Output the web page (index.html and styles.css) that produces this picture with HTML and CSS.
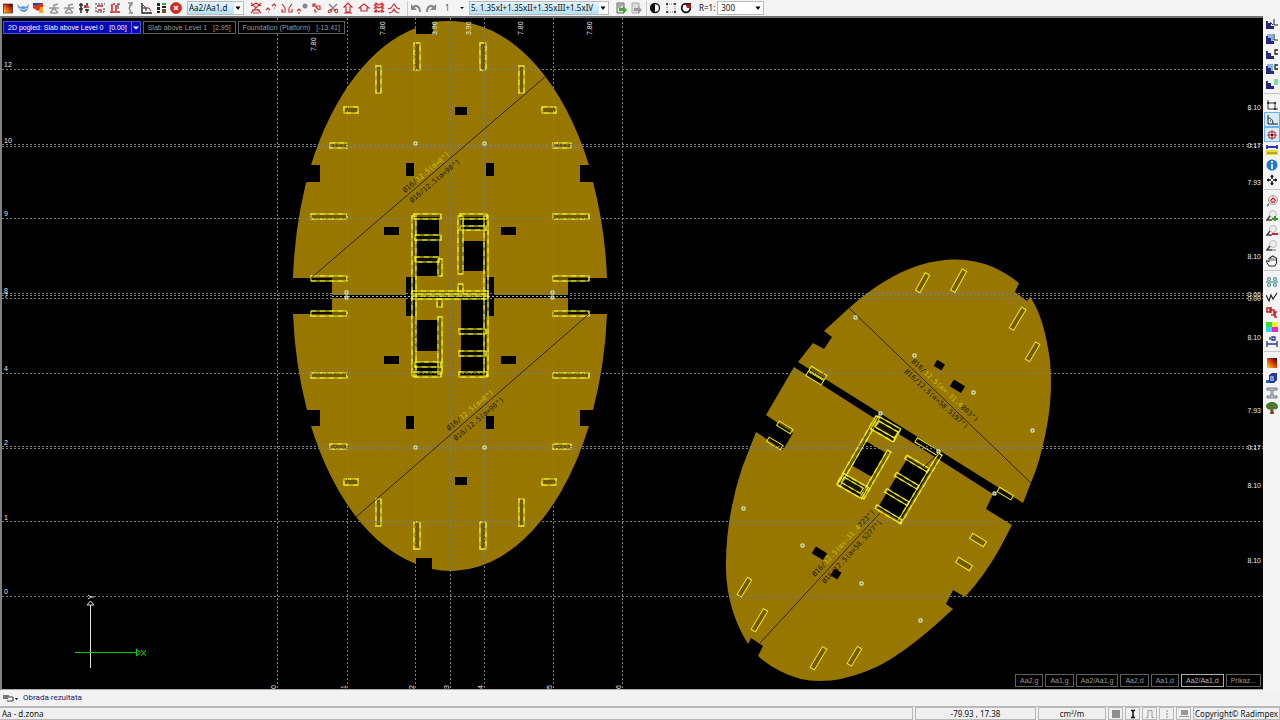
FILE: index.html
```html
<!DOCTYPE html>
<html lang="en">
<head>
<meta charset="utf-8">
<title>Aa - d.zona</title>
<link rel="stylesheet" href="styles.css">
</head>
<body>
<header class="toolbar">
  <div class="group group-results">
    <button class="tool" aria-label="Colour map"><svg viewBox="0 0 12 12"><defs><linearGradient id="heat" x1="0" y1="1" x2="1" y2="0"><stop offset="0" stop-color="#f0e020"/><stop offset=".45" stop-color="#e85010"/><stop offset=".7" stop-color="#a02010"/><stop offset="1" stop-color="#101010"/></linearGradient></defs><rect x="1.500" y="2" width="9" height="9" fill="url(#heat)" stroke="#301008" stroke-width=".6"/></svg></button>
    <button class="tool" aria-label="Surface"><svg viewBox="0 0 12 12"><path d="M0 2l3 3 3-1 3 1 3-3c-1 5-2 8-5 8S1 7 0 2z" fill="#5a96dc"/><path d="M2 6c3 2 6 2 8 0" fill="none" stroke="#e4f0ff"/></svg></button>
    <button class="tool" aria-label="Section map"><svg viewBox="0 0 12 12"><rect x="1" y="1" width="9" height="5" fill="#2440c0"/><path d="M1 6V3h5l5-2v5L6 9z" fill="#d83810"/><path d="M8 5h3v6H7z" fill="#f0a428"/></svg></button>
    <button class="tool" aria-label="Node"><svg viewBox="0 0 12 12"><use href="#grayfig"/></svg></button>
    <button class="tool" aria-label="Node 2"><svg viewBox="0 0 12 12"><path id="grayfig" d="M1 6h10M6 2v4L2 11M6 6l4 5M3 11h6M7 3l3-1" fill="none" stroke="#999" stroke-width="1.600"/></svg></button>
    <button class="tool" aria-label="Beam"><svg viewBox="0 0 12 12"><path d="M1 3h4M1 7h4M3 1v10M9 1v3M9 7v4M7 8h4" stroke="#282828" stroke-width="1.500"/><path d="M6 5h5M7 3v3" stroke="#c02020" stroke-width="1.500"/></svg></button>
    <button class="tool" aria-label="Support"><svg viewBox="0 0 12 12"><path d="M1 2h10M2 5v5h8V5" fill="none" stroke="#333" stroke-dasharray="2 1"/><path d="M3 4h6M4 8h4" stroke="#d02020" stroke-width="1.500"/></svg></button>
    <button class="tool" aria-label="Load"><svg viewBox="0 0 12 12"><path d="M1 10h10M3 2v7M7 3v6M4 2h2" stroke="#c82020" stroke-width="1.500"/><path d="M8 2h3M9 2v5" stroke="#333"/></svg></button>
    <button class="tool" aria-label="Wall"><svg viewBox="0 0 12 12"><path d="M4 1h5M5 11h4M8 2L5 6l2 4M6 2v3" fill="none" stroke="#888" stroke-width="1.300"/></svg></button>
    <button class="tool" aria-label="Diagram"><svg viewBox="0 0 12 12"><path d="M2 1v10h10" fill="none" stroke="#222" stroke-width="1.400"/><path d="M3 3l3 3 3 0 2 3" fill="none" stroke="#b02020"/><path d="M3 6h3v3" fill="none" stroke="#222"/></svg></button>
    <button class="tool" aria-label="Legend"><svg viewBox="0 0 12 12"><path d="M2 1h3v3H2zM2 5h3v3H2zM2 9h3v2H2z" fill="#222"/><path d="M7 1h4v2H7z" fill="#38a838"/><path d="M7 4h4v2H7z" fill="#222"/><path d="M7 7h4v4H7z" fill="#805020"/></svg></button>
    <button class="tool" aria-label="Close"><svg viewBox="0 0 12 12"><circle cx="6" cy="6" r="5.500" fill="#dc2820" stroke="#981410" stroke-width=".6"/><path d="M4 4l4 4M8 4L4 8" stroke="#fff" stroke-width="1.500"/></svg></button>
  </div>
  <label class="combo combo-zone"><select aria-label="Zone"><option>Aa2/Aa1,d</option></select><svg class="caret" viewBox="0 0 8 8"><path d="M1.500 2.500h5L4 6z"/></svg></label>
  <div class="group group-bars">
    <button class="tool red" aria-label="Delete bars"><svg viewBox="0 0 12 12"><path d="M1 1l10 10M11 1L1 11M1 4l5-3 5 3M2 8h8M3 11h6"/></svg></button>
    <button class="tool red" aria-label="Bar up"><svg viewBox="0 0 12 12"><path d="M1 8l2-2 2 2M7 4l2-2 2 2M3 10h1M9 6h1"/></svg></button>
    <button class="tool red" aria-label="Bar mirror"><svg viewBox="0 0 12 12"><path d="M1 2l3 4M11 2L8 6M1 7v3h4M11 7v3H7M4 6v3M8 6v3"/></svg></button>
    <button class="tool red" aria-label="Bar node"><svg viewBox="0 0 12 12"><path d="M1 9l2-2 2 2M2 11h2"/><circle cx="9" cy="4" r="2.500" fill="#888" stroke="none"/></svg></button>
    <button class="tool red" aria-label="Bar rotate"><svg viewBox="0 0 12 12"><path d="M2 5V2h3M2 2l6 6M5 4h4v4M4 7v3h2"/></svg></button>
    <button class="tool" aria-label="Cut"><svg viewBox="0 0 12 12"><path d="M2 2l7 7M10 2L3 9" stroke="#888" stroke-width="1.500"/><path d="M1 9l3-2 1 2-3 2zM7 8l3-1 1 3-2 1z" fill="none" stroke="#d02020"/></svg></button>
    <button class="tool red" aria-label="Support up"><svg viewBox="0 0 12 12"><path d="M2 5l4-4 4 4H8v5H4V5zM2 11h8"/></svg></button>
    <button class="tool red" aria-label="Roof"><svg viewBox="0 0 12 12"><path d="M1 6l5-4 5 4H9v3H3V6z"/></svg></button>
    <button class="tool red" aria-label="Hatch"><svg viewBox="0 0 12 12"><path d="M1 4l2-3 3 2 3-2 2 3M1 7l2-3 3 2 3-2 2 3M1 10l2-2 3 2 3-2 2 2M3 1v10M9 1v10"/></svg></button>
    <button class="tool red" aria-label="Profile"><svg viewBox="0 0 12 12"><path d="M0 7l3-1 3-4 3 4 3 1M1 11l3-1 2-3 2 3 3 1"/></svg></button>
  </div>
  <div class="group group-history">
    <button class="tool" aria-label="Undo"><svg viewBox="0 0 12 12"><path d="M3 6c2-4 7-2 7 4" fill="none" stroke="#888" stroke-width="2"/><path d="M1 2v6h6z" fill="#888"/></svg></button>
    <button class="tool" aria-label="Redo"><svg viewBox="0 0 12 12"><path d="M9 6C7 2 2 4 2 10" fill="none" stroke="#888" stroke-width="2"/><path d="M11 2v6H5z" fill="#888"/></svg></button>
  </div>
  <label class="combo combo-step"><select aria-label="Step" disabled><option>1</option></select><svg class="caret" viewBox="0 0 8 8"><path d="M2 3h4L4 5z"/></svg></label>
  <label class="combo combo-load"><select aria-label="Load combination"><option>5. 1.35xI+1.35xII+1.35xIII+1.5xIV</option></select><svg class="caret" viewBox="0 0 8 8"><path d="M1.500 2.500h5L4 6z"/></svg></label>
  <div class="group group-export">
    <button class="tool" aria-label="Export"><svg viewBox="0 0 12 12"><path d="M2 1h7v10H2z" fill="#ddd" stroke="#666"/><path d="M3 3h5M3 5h3" stroke="#777"/><path d="M4 6h4V4l4 4-4 4V9H4z" fill="#38ac28"/></svg></button>
    <button class="tool" aria-label="Import"><svg viewBox="0 0 12 12"><path d="M2 1h7v10H2z" fill="#ddd" stroke="#aaa"/><path d="M4 6h4V4l4 4-4 4V9H4z" fill="#999"/></svg></button>
  </div>
  <div class="group group-view">
    <button class="tool" aria-label="Contrast"><svg viewBox="0 0 12 12"><circle cx="6" cy="6" r="4.500" fill="#fff" stroke="#111" stroke-width="1.300"/><path d="M6 1.500a4.500 4.500 0 0 0 0 9z" fill="#111"/></svg></button>
    <button class="tool" aria-label="Selection"><svg viewBox="0 0 12 12"><path d="M2 2h8v8H2z" fill="none" stroke="#777" stroke-dasharray="1 1"/><path d="M1 1h2v2H1zM9 1h2v2H9zM1 9h2v2H1zM9 9h2v2H9z" fill="#444"/></svg></button>
    <button class="tool" aria-label="Palette"><svg viewBox="0 0 12 12"><circle cx="6" cy="6" r="4.300" fill="#fff" stroke="#111" stroke-width="1.800"/><path d="M5 1h6v5H7z" fill="#a82020"/><path d="M5 2h6" stroke="#111"/></svg></button>
  </div>
  <label class="scale-label" for="scale">R=1:</label>
  <div class="combo combo-scale"><select id="scale"><option>300</option></select><svg class="caret" viewBox="0 0 8 8"><path d="M1.500 2.500h5L4 6z"/></svg></div>
</header>

<main class="work">
  <section class="canvas">
    <svg class="drawing" viewBox="0 0 1261 671" preserveAspectRatio="xMinYMin slice" role="img" aria-label="Slab plan">
      <g transform="translate(-2 -18)">
      <g class="slab">
        <path d="M293 278A157 275 0 0 1 311 165A157 275 0 0 1 416 28V34H433V22Q450 20 463 22A157 275 0 0 1 589 165H580V182H593A157 275 0 0 1 607 278H568V295H332V278z"/>
        <path d="M293 314A157 275 0 0 0 307 410H320V426H311A157 275 0 0 0 416 564V558H432V569A157 275 0 0 0 589 426H580V410H593A157 275 0 0 0 607 314H568V298H332V314z"/>
        <path d="M798 362L813 343 824 349 832 337 824 331 849 308Q885 276 920 265 960 253 993 267 1008 274 1019 283L1015 292 1027 301 1030 297Q1044 316 1050 361 1055 410 1036 470L1023 503z"/>
        <path d="M794 367L993 494 986 509 1012 525 1000 548Q985 575 965 597L953 590 946 604 953 609Q900 659 867 671 817 691 780 671 768 665 758 656L763 646 751 638 748 644Q727 610 726 570 725 520 742 468L756 432 783 450 793 433 766 415z"/>
      </g>
      <g class="void">
        <path d="M293 165H320V182H293zM293 410H320V426H293z"/>
        <path d="M455 107h12v8h-12zM406 163h8v13h-8zM486 163h8v13h-8zM384 227h15v8h-15zM501 227h15v8h-15zM406 277h9v39h-9zM486 277h8v39h-8z"/>
        <path d="M384 356h15v8h-15zM501 356h15v8h-15zM406 416h8v13h-8zM486 416h8v13h-8zM455 477h12v8h-12z"/>
        <path d="M416 217h23v59h-23zM461 217h25v13h-25zM462 241h24v30h-24zM415 320h24v31h-24zM415 362h24v13h-24zM461 298h25v77h-25z"/>
      </g>

      <defs>
        <g id="ties">
          <rect x="414" y="43" width="6" height="27"/><rect x="480" y="43" width="6" height="27"/>
          <rect x="376" y="66" width="5" height="27"/><rect x="519" y="66" width="5" height="27"/>
          <rect x="344" y="107" width="14" height="6"/><rect x="542" y="107" width="14" height="6"/>
          <rect x="330" y="143" width="17" height="5"/><rect x="553" y="143" width="18" height="5"/>
          <rect x="311" y="214" width="36" height="5"/><rect x="553" y="214" width="36" height="5"/>
          <rect x="311" y="276" width="36" height="5"/><rect x="553" y="276" width="36" height="5"/>
        </g>
        <g id="cores">
          <rect x="412" y="216" width="4" height="160"/><rect x="484" y="216" width="4" height="160"/>
          <rect x="414" y="214" width="27" height="5"/><rect x="415" y="235" width="26" height="5"/><rect x="415" y="257" width="24" height="5"/><rect x="438" y="259" width="4" height="17"/>
          <rect x="460" y="214" width="27" height="5"/><rect x="460" y="226" width="26" height="4"/><rect x="458" y="216" width="5" height="58"/><rect x="458" y="284" width="5" height="8"/>
          <rect x="412" y="291" width="76" height="3"/><rect x="412" y="296" width="76" height="3"/><rect x="437" y="299" width="5" height="8"/>
          <rect x="438" y="317" width="4" height="57"/><rect x="415" y="362" width="26" height="5"/><rect x="414" y="372" width="27" height="5"/>
          <rect x="459" y="329" width="27" height="5"/><rect x="459" y="351" width="27" height="5"/><rect x="459" y="372" width="28" height="5"/>
        </g>
      </defs>
      <use class="wall" href="#ties"/><use class="rebar" href="#ties"/>
      <g transform="matrix(1 0 0 -1 0 592)"><use class="wall" href="#ties"/><use class="rebar" href="#ties"/></g>

      <g class="void">
        <rect transform="translate(940 365) rotate(31)" x="-5" y="-3" width="9" height="7"/>
        <rect transform="translate(957 386) rotate(31)" x="-6" y="-4" width="13" height="8"/>
        <rect transform="translate(819 553) rotate(31)" x="-6" y="-4" width="13" height="8"/>
        <rect transform="translate(836 574) rotate(31)" x="-4" y="-4" width="8" height="8"/>
      </g>
      <g class="wall">
        <g transform="translate(923 283) rotate(29)"><rect x="-3" y="-10" width="5" height="20"/></g>
        <g transform="translate(959 281) rotate(29)"><rect x="-3" y="-12" width="5" height="24"/></g>
        <g transform="translate(1018 319) rotate(31)"><rect x="-3" y="-12" width="5" height="24"/></g>
        <g transform="translate(1033 352) rotate(31)"><rect x="-3" y="-10" width="5" height="20"/></g>
        <g transform="translate(744 587) rotate(31)"><rect x="-2" y="-10" width="5" height="20"/></g>
        <g transform="translate(759 620) rotate(31)"><rect x="-2" y="-12" width="5" height="24"/></g>
        <g transform="translate(818 658) rotate(31)"><rect x="-2" y="-12" width="5" height="24"/></g>
        <g transform="translate(854 656) rotate(31)"><rect x="-2" y="-10" width="5" height="20"/></g>
        <g transform="translate(978 540) rotate(31)"><rect x="-8" y="-3" width="16" height="6"/></g>
        <g transform="translate(964 564) rotate(31)"><rect x="-8" y="-3" width="16" height="6"/></g>
        <g transform="translate(1005 494) rotate(31)"><rect x="-8" y="-3" width="16" height="5"/></g>
        <g transform="translate(785 427) rotate(31)"><rect x="-8" y="-2" width="16" height="5"/></g>
        <g transform="translate(775 443) rotate(31)"><rect x="-8" y="-2" width="16" height="5"/></g>
        <g transform="translate(816 376) rotate(31)"><rect x="-9" y="-6" width="18" height="5"/><rect x="-9" y="0" width="18" height="5"/></g>
        <g transform="translate(927 447) rotate(31)"><rect x="-13" y="-3" width="26" height="5"/></g>
      </g>
      <defs>
        <g id="core-a"><rect x="-15" y="-40" width="4" height="79"/><rect x="12" y="-16" width="4" height="54"/><rect x="-13" y="-41" width="26" height="15"/><rect x="-10" y="-37" width="22" height="7"/><rect x="-14" y="26" width="28" height="13"/><rect x="-12" y="29" width="22" height="6"/></g>
        <g id="core-b"><rect x="12" y="-49" width="4" height="80"/><rect x="-14" y="-31" width="26" height="4"/><rect x="-14" y="-11" width="26" height="4"/><rect x="-14" y="8" width="26" height="4"/><rect x="-14" y="27" width="29" height="4"/></g>
      </defs>
      <g transform="translate(869 458) rotate(30)"><path class="void" d="M-12-13h24v28h-24zM-12-40h24v13h-24zM-13 27h26v11h-26z"/><use class="wall" href="#core-a"/><use class="rebar" href="#core-a"/></g>
      <g transform="translate(903 489) rotate(31)"><path class="void" d="M-12-29h26v58h-26z"/><use class="wall" href="#core-b"/><use class="rebar" href="#core-b"/></g>

      <path class="grid" d="M277.500 18V690M347.500 18V690M415.500 18V690M450.500 18V690M484.500 18V690M553.500 18V690M622.500 18V690M2 69.500H1263M2 144.500H1263M2 146.500H1263M2 218.500H1263M2 293.500H1263M2 295.500H1263M2 298.500H1263M2 373.500H1263M2 446.500H1263M2 448.500H1263M2 521.500H1263M2 596.500H1263"/>
      <path class="axis" d="M332 296.500H568"/>
      <path class="axis-dash" d="M332 296.500H568"/>
      <use class="wall" href="#cores"/><use class="rebar" href="#cores"/>
      <path class="diagonal" d="M311 278L546 76M356 517L589 314M849 308L1031 483M760 643L880 513M940 452L924 467"/>

      <g class="mark">
        <text transform="translate(405 193) rotate(-40)">Ø16/<tspan class="hot">12.5(α=0°)</tspan></text>
        <text transform="translate(412 203) rotate(-40)">Ø16/12.5(α=90°)</text>
        <text transform="translate(449 431) rotate(-40)">Ø16/<tspan class="hot">12.5(α=0°)</tspan></text>
        <text transform="translate(456 441) rotate(-40)">Ø16/12.5(α=90°)</text>
        <text transform="translate(911 362) rotate(43)">Ø16/<tspan class="hot">12.5(α=-31.4</tspan>803°)</text>
        <text transform="translate(904 372) rotate(43)">Ø16/12.5(α=58.5197°)</text>
        <text transform="translate(815 577) rotate(-47)">Ø16/<tspan class="hot">12.5(α=-31.4</tspan>723°)</text>
        <text transform="translate(825 584) rotate(-47)">Ø16/12.5(α=58.5277°)</text>
      </g>

      <path class="node" d="M414 142h3v3h-3zM483 142h3v3h-3zM414 446h3v3h-3zM483 446h3v3h-3zM345 291h3v3h-3zM345 296h3v3h-3zM551 291h3v3h-3zM551 296h3v3h-3zM854 316h3v3h-3zM913 354h3v3h-3zM972 391h3v3h-3zM1031 429h3v3h-3zM879 412h3v3h-3zM937 450h3v3h-3zM993 492h3v3h-3zM742 507h3v3h-3zM801 544h3v3h-3zM860 582h3v3h-3zM919 619h3v3h-3z"/>

      <g class="dim">
        <text x="4" y="67">12</text><text x="4" y="143">10</text><text x="4" y="216">9</text><text x="4" y="293">8</text><text x="4" y="298">7</text><text x="4" y="371">4</text><text x="4" y="445">2</text><text x="4" y="520">1</text><text x="4" y="594">0</text>
        <text transform="translate(276 689) rotate(-90)">0</text><text transform="translate(346 689) rotate(-90)">1</text><text transform="translate(414 689) rotate(-90)">2</text><text transform="translate(449 689) rotate(-90)">3</text><text transform="translate(483 689) rotate(-90)">4</text><text transform="translate(552 689) rotate(-90)">5</text><text transform="translate(621 689) rotate(-90)">6</text>
        <text transform="translate(316 51) rotate(-90)">7.80</text><text transform="translate(385 35) rotate(-90)">7.80</text><text transform="translate(437 35) rotate(-90)">3.90</text><text transform="translate(471 35) rotate(-90)">3.90</text><text transform="translate(523 35) rotate(-90)">7.80</text><text transform="translate(592 35) rotate(-90)">7.80</text>
      </g>
      <g class="dim dim-end">
        <text x="1261" y="110">8.10</text><text x="1261" y="148">0:17</text><text x="1261" y="185">7.93</text><text x="1261" y="259">8.10</text><text x="1261" y="297">0.00</text><text x="1261" y="301">0.00</text><text x="1261" y="340">8.10</text><text x="1261" y="413">7.93</text><text x="1261" y="450">0:17</text><text x="1261" y="488">8.10</text><text x="1261" y="563">8.10</text>
      </g>

      <path class="axis-y" d="M90.500 668V605M87 605L90.500 601 94 605zM88 595l3 2 3 0M88 599l3-2"/>
      <path class="axis-x" d="M75 652.500H136M136.500 649v7l4-3.500zM141 650l5 6M146 650l-5 6"/>
      </g>
    </svg>

    <nav class="tabs" aria-label="Levels">
      <div class="tab-split"><button class="tab tab-on">2D pogled: Slab above Level 0 &nbsp; [0.00]</button><button class="tab-menu" aria-label="Level list"><svg viewBox="0 0 8 8"><path d="M0 2h8L4 6z"/></svg></button></div>
      <button class="tab">Slab above Level 1 &nbsp; [2.95]</button>
      <button class="tab">Foundation (Platform) &nbsp; [-13.41]</button>
    </nav>
    <nav class="zones" aria-label="Zones">
      <button class="zone">Aa2,g</button><button class="zone">Aa1,g</button><button class="zone">Aa2/Aa1,g</button><button class="zone">Aa2,d</button><button class="zone">Aa1,d</button><button class="zone zone-on">Aa2/Aa1,d</button><button class="zone">Prikaz...</button>
    </nav>
  </section>

  <aside class="side">
    <div class="stack">
      <button class="tool" aria-label="Line level"><svg viewBox="0 0 12 12"><path id="steps" d="M0 3h2v2h3v3h3v3H0z" fill="#28287c"/><path d="M4 4l3 3" stroke="#28287c"/><path d="M8 1v6h4" fill="none" stroke="#222"/></svg></button>
      <button class="tool" aria-label="Line level solid"><svg viewBox="0 0 12 12"><path d="M1 1h6v7H1z" fill="#88b4e4"/><use href="#steps"/><path d="M8 1v6h4" fill="none" stroke="#222"/></svg></button>
      <button class="tool" aria-label="Column level"><svg viewBox="0 0 12 12"><use href="#steps"/><path d="M12 2H9v4h3" fill="none" stroke="#222" stroke-width="1.300"/></svg></button>
      <button class="tool" aria-label="Column level solid"><svg viewBox="0 0 12 12"><path d="M1 1h6v7H1z" fill="#88b4e4"/><use href="#steps"/><path d="M12 2H9v4h3" fill="none" stroke="#222" stroke-width="1.300"/></svg></button>
      <button class="tool" aria-label="Fill level"><svg viewBox="0 0 12 12"><use href="#steps"/><path d="M8 1h4v6H8z" fill="#80dca0"/></svg></button>
    </div>
    <div class="stack">
      <button class="tool" aria-label="Rectangle"><svg viewBox="0 0 12 12"><path d="M2 1v9h10M2 4h7v6" fill="none" stroke="#333"/><path d="M1 3h2v2H1zM8 3h2v2H8zM8 9h2v2H8z" fill="#333"/></svg></button>
      <button class="tool tool-on" aria-label="Angle"><svg viewBox="0 0 12 12"><path d="M2 1v9h10M2 4c4 0 5 3 5 6M4 7h1" fill="none" stroke="#222"/></svg></button>
      <button class="tool tool-on" aria-label="Snap"><svg viewBox="0 0 12 12"><path d="M6 1v10M1 6h10M3 3h6v6H3z" fill="none" stroke="#c02020"/><path d="M5 5h2v2H5z" fill="#501010"/></svg></button>
      <button class="tool" aria-label="Measure"><svg viewBox="0 0 12 12"><path d="M1 1v4M11 1v4M1 3h10" stroke="#2838b0" stroke-width="1.800"/><path d="M0 6h12v5H0z" fill="#e4dc30"/><path d="M1 9h10" stroke="#888020"/></svg></button>
      <button class="tool" aria-label="Information"><svg viewBox="0 0 12 12"><circle cx="6" cy="6" r="5.500" fill="#2878c8"/><path d="M6 2v2M6 5v5" stroke="#fff" stroke-width="1.600"/></svg></button>
      <button class="tool" aria-label="Move"><svg viewBox="0 0 12 12"><path d="M6 1v10M1 6h10" stroke="#111" stroke-width="1.600"/><path d="M4 3l2-2 2 2M4 9l2 2 2-2M3 4L1 6l2 2M9 4l2 2-2 2" fill="#111"/><circle cx="6" cy="6" r="1.200" fill="#fff"/></svg></button>
    </div>
    <div class="stack">
      <button class="tool" aria-label="Zoom home"><svg viewBox="0 0 12 12"><circle cx="7" cy="5" r="4.500" fill="#eee" stroke="#999"/><path d="M4 6l3-3 3 3M5 7h4" fill="none" stroke="#d02828" stroke-width="1.400"/><path d="M3 9l-2 2" stroke="#888" stroke-width="2"/></svg></button>
      <button class="tool" aria-label="Zoom in"><svg viewBox="0 0 12 12"><g id="lens"><circle cx="7" cy="4" r="3.500" fill="#eee" stroke="#bbb"/><path d="M4 6l-3 4 5 0" fill="none" stroke="#444" stroke-width="1.500"/></g><path d="M9 6v5M6 9h6" stroke="#28a028" stroke-width="2"/></svg></button>
      <button class="tool" aria-label="Zoom out"><svg viewBox="0 0 12 12"><use href="#lens"/><path d="M6 9h6" stroke="#d02828" stroke-width="2"/></svg></button>
      <button class="tool" aria-label="Zoom window"><svg viewBox="0 0 12 12"><use href="#lens"/><path d="M6 10h4" stroke="#666"/></svg></button>
      <button class="tool" aria-label="Pan"><svg viewBox="0 0 12 12"><path d="M3 11L0 6l2 0 1 1V3h1.500V2H6V1h1.500v1H9v1h1.500v5L9 11z" fill="#fff" stroke="#222"/><path d="M5 3v3M7 3v3M9 4v2" stroke="#222" stroke-width=".8"/></svg></button>
    </div>
    <div class="stack">
      <button class="tool" aria-label="Supports"><svg viewBox="0 0 12 12"><g fill="none" stroke="#489090" stroke-width="1.200"><circle cx="3" cy="3" r="1.500"/><circle cx="9" cy="3" r="1.500"/><circle cx="3" cy="9" r="1.500"/><circle cx="9" cy="9" r="1.500"/><path d="M0 6h12"/></g></svg></button>
      <button class="tool" aria-label="Polyline"><svg viewBox="0 0 12 12"><path d="M0 4l3 6 2-6 2 4 4-6" fill="none" stroke="#222" stroke-width="1.200"/></svg></button>
      <button class="tool" aria-label="Labels"><svg viewBox="0 0 12 12"><path d="M1 2h3v4H1zM5 1v6M5 4h3v5H5M11 6H9v5h2" fill="none" stroke="#c82020" stroke-width="1.500"/></svg></button>
      <button class="tool" aria-label="Colours"><svg viewBox="0 0 12 12"><path d="M0 1h6v5H0z" fill="#30e040"/><path d="M6 1h6v5H6z" fill="#f8f020"/><path d="M0 6h6v5H0z" fill="#28d8e8"/><path d="M6 6h6v5H6z" fill="#f020d0"/></svg></button>
      <button class="tool" aria-label="Dimension"><svg viewBox="0 0 12 12"><path d="M1 5v6M11 5v6M1 8h10M4 1v3M6 1h3v3H6z" fill="none" stroke="#28388c" stroke-width="1.300"/></svg></button>
    </div>
    <div class="stack">
      <button class="tool" aria-label="Heat map"><svg viewBox="0 0 12 12"><rect x="1" y="1" width="10" height="10" fill="url(#heat)"/></svg></button>
      <button class="tool" aria-label="Solid view"><svg viewBox="0 0 12 12"><path d="M3 3l3-2h5v7l-3 3H3z" fill="#28388c"/><path d="M4 4h4v5H4z" fill="#7898d8"/><path d="M0 8h3v3H0z" fill="#2868c8"/></svg></button>
      <button class="tool" aria-label="Steel section"><svg viewBox="0 0 12 12"><path d="M1 1h10v2H7v6h4v2H1V9h4V3H1z" fill="#c8d4d8" stroke="#506068" stroke-width=".8"/></svg></button>
      <button class="tool" aria-label="Timber"><svg viewBox="0 0 12 12"><path d="M5 6h2l1 6H4z" fill="#804020"/><path d="M6 0c3 0 6 2 6 5 0 2-3 3-5 2C4 9 0 7 0 4c0-2 3-4 6-4z" fill="#388030"/><path d="M2 5h2M6 3h2M8 6h2" stroke="#c04820" stroke-width="1.500"/></svg></button>
    </div>
  </aside>
</main>

<section class="command"><button class="cmd-menu" aria-label="Windows"><svg viewBox="0 0 16 10"><path d="M0 2h6v4H0z" fill="#777"/><path d="M6 4h4v4H4" fill="#fff" stroke="#333"/><path d="M12 5h3l-1.500 2z"/></svg></button><span>Obrada rezultata</span></section>

<footer class="status">
  <span class="cell cell-text">Aa - d.zona</span>
  <span class="cell cell-coords">-79.93 , 17.38</span>
  <span class="cell cell-unit">cm²/m</span>
  <button class="cell cell-icon" aria-label="Grid"><svg viewBox="0 0 10 10"><path d="M1 2h8M1 4h8M1 6h8M1 8h8M2 1v8M4 1v8M6 1v8M8 1v8" stroke="#555" stroke-width=".8"/></svg></button>
  <button class="cell cell-icon" aria-label="Ortho"><svg viewBox="0 0 10 10"><path d="M3 1.500h4M3 8.500h4M5 1v8" stroke="#111" stroke-width="1.500"/></svg></button>
  <button class="cell cell-icon" aria-label="Polar"><svg viewBox="0 0 10 10"><path d="M1 8.500h2v-7h4v7h2" fill="none" stroke="#999"/></svg></button>
  <button class="cell cell-icon" aria-label="Track"><svg viewBox="0 0 10 10"><path d="M5 1v8" stroke="#888" stroke-dasharray="2 1"/></svg></button>
  <button class="cell cell-icon" aria-label="Layer"><svg viewBox="0 0 10 10"><path d="M2 1h7v5H2zM0 7h10v1H0z" fill="#999"/></svg></button>
  <span class="cell cell-copy">Copyright© Radimpex</span>
</footer>
</body>
</html>
```
FILE: styles.css
```css
* { box-sizing: border-box; }

body {
  margin: 0;
  height: 100vh;
  display: flex;
  flex-direction: column;
  overflow: hidden;
  background: #f2f2f2;
  color: #111;
  font: 8px/10px "Noto Sans", sans-serif;
}

button, select {
  margin: 0;
  padding: 0;
  border: 0;
  border-radius: 0;
  background: none;
  color: inherit;
  font: inherit;
}

.toolbar {
  height: 16px;
  flex: none;
  display: flex;
  align-items: center;
  background: #f4f4f4;
}

.group { display: flex; flex: none; }
.group .tool { flex: 1; }
.group-results { width: 184px; }
.group-bars { width: 154px; margin: 0 3px 0 4px; }
.group-history { width: 31px; padding-left: 1px; margin-left: 2px; border-left: 1px solid #ccc; }
.group-export { width: 31px; margin-left: 4px; }
.group-view { width: 48px; margin-left: 2px; border-left: 1px solid #ccc; }

.tool {
  height: 15px;
  display: flex;
  align-items: center;
  justify-content: center;
}
.tool svg { width: 12px; height: 12px; flex: none; }
.red svg { fill: none; stroke: #cc3030; stroke-width: 1.2; }

.combo {
  display: flex;
  align-items: center;
  flex: none;
  height: 14px;
  border: 1px solid #bbb;
  background: #fff;
}
.combo select {
  flex: 1;
  min-width: 0;
  height: 12px;
  padding-left: 1px;
  appearance: none;
  opacity: 1;
  font-size: 8px;
  line-height: 12px;
}
.caret { width: 8px; height: 8px; flex: none; margin-right: 1px; pointer-events: none; }
.combo-zone { width: 57px; margin-left: 3px; }
.combo-step { width: 23px; border: 0; background: none; color: #555; margin-left: 6px; }
.combo-load { width: 140px; margin-left: 2px; }
.combo-zone select, .combo-load select { background: linear-gradient(#e4f4fc, #b4dff6); }
.scale-label { margin: 0 2px 0 5px; }
.combo-scale { width: 47px; }
.combo-scale select { padding-left: 3px; }

.work { flex: 1; min-height: 0; display: flex; }

.canvas {
  position: relative;
  flex: 1;
  min-width: 0;
  overflow: hidden;
  border-top: 2px solid #707070;
  border-left: 2px solid #808080;
  border-bottom: 1px solid #aaa;
  background: #000;
}
.drawing { display: block; width: 100%; height: 100%; }

.slab { fill: #977700; }
.void { fill: #000; }
.wall { fill: #2a2100; fill-opacity: .35; stroke: #f4f000; stroke-width: 1; }
.rebar { fill: none; stroke: #ffff50; stroke-width: 2; stroke-dasharray: 5 4; stroke-opacity: .4; }
.grid { fill: none; stroke: #7c7c7c; stroke-width: 1; stroke-dasharray: 2 2; }
.axis { stroke: #000; stroke-width: 3; }
.axis-dash { stroke: #b0b0b0; stroke-dasharray: 2 2; }
.diagonal { fill: none; stroke: #302400; stroke-width: 1; }
.mark { fill: #201800; font: 7px "DejaVu Sans Mono", monospace; }
.hot { fill: #d0c000; }
.node { fill: #688848; stroke: #e8f4d8; stroke-width: 1; }
.dim { fill: #e8e8e8; font: 7px "Liberation Sans", sans-serif; }
.dim-end { text-anchor: end; }
.axis-x { fill: none; stroke: #00d000; }
.axis-y { fill: none; stroke: #e0e0e0; }

.tabs, .zones { position: absolute; display: flex; gap: 2px; font: 7px/11px "Liberation Sans", sans-serif; }
.tabs { top: 3px; left: 1px; }
.zones { right: 2px; bottom: 2px; }
.tab, .zone {
  height: 13px;
  padding: 0 4px;
  border: 1px solid #606060;
  background: #000;
  color: #999;
  white-space: nowrap;
}
.tab-split { display: flex; border: 1px solid #4858d0; background: #0808b8; }
.tab-on { height: 11px; border: 0; background: none; color: #fff; }
.tab-menu { width: 9px; display: flex; align-items: center; justify-content: center; border-left: 1px solid #6070d0; }
.tab-menu svg { width: 6px; height: 6px; fill: #fff; }
.zone-on { border-color: #b0b0b0; color: #bbb; }

.side { width: 17px; flex: none; display: flex; flex-direction: column; padding-left: 1px; background: #f4f4f4; }
.stack { display: flex; flex-direction: column; padding-bottom: 2px; margin-bottom: 3px; border-bottom: 1px solid #c4c4c4; }
.stack .tool { flex: none; }
.stack:last-child { border: 0; }
.tool-on { border: 1px solid #70b0e8; background: #d8ebfa; }

.command {
  height: 17px;
  flex: none;
  display: flex;
  align-items: center;
  gap: 4px;
  padding-left: 3px;
  border-bottom: 1px solid #b8b8b8;
  color: #20206c;
  font-family: Roboto, sans-serif;
}
.cmd-menu { display: flex; }
.cmd-menu svg { width: 16px; height: 10px; }

.status { height: 13px; flex: none; display: flex; gap: 2px; background: #f0f0f0; }
.cell {
  display: flex;
  align-items: center;
  justify-content: center;
  flex: none;
  border: 1px solid #b8b8b8;
}
.cell-text { flex: 1; justify-content: flex-start; padding-left: 2px; border-left: 0; }
.cell-coords { width: 121px; }
.cell-unit { width: 68px; }
.cell-icon { width: 15px; }
.cell-icon svg { width: 10px; height: 10px; }
.cell-copy { width: 87px; }
```
